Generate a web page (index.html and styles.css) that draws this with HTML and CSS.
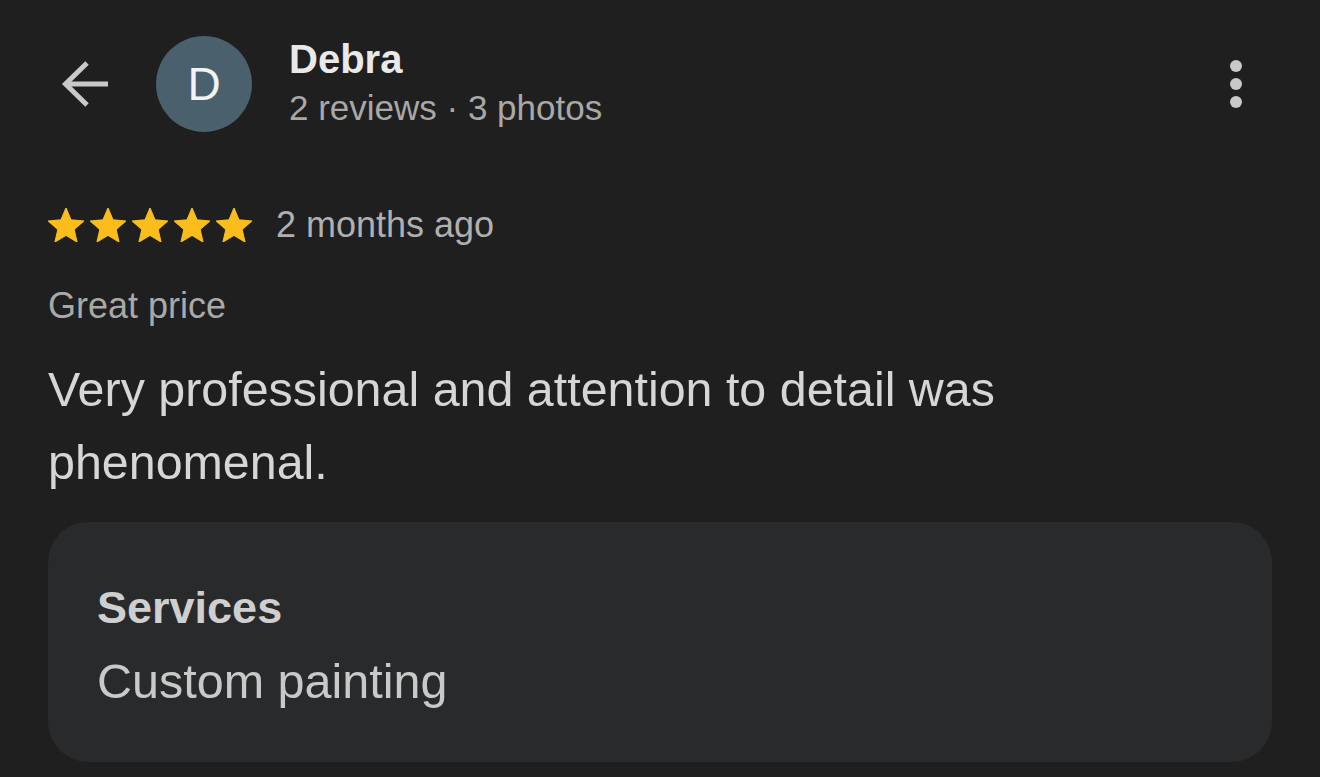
FILE: index.html
```html
<!DOCTYPE html>
<html lang="en">
<head>
<meta charset="utf-8">
<title>Review</title>
<link rel="stylesheet" href="styles.css">
</head>
<body>
<div class="page">
  <header class="header">
    <button class="back" aria-label="Back">
      <svg width="48" height="48" viewBox="0 0 48 48" fill="none" stroke="#c9c9c9" stroke-width="5" stroke-linecap="butt">
        <path d="M5 24H48"/>
        <path d="M27 3L5.5 24L27 45" stroke-linejoin="miter"/>
      </svg>
    </button>
    <div class="avatar">D</div>
    <div class="who">
      <div class="name">Debra</div>
      <div class="meta">2 reviews · 3 photos</div>
    </div>
    <div class="more" aria-label="More">
      <span class="dot"></span><span class="dot"></span><span class="dot"></span>
    </div>
  </header>

  <main class="review">
    <div class="rating">
      <div class="stars">
        <svg class="star" viewBox="2 2 20 19"><path d="M12 17.27L18.18 21l-1.64-7.03L22 9.24l-7.19-.61L12 2 9.19 8.63 2 9.24l5.46 4.73L5.82 21z"/></svg>
        <svg class="star" viewBox="2 2 20 19"><path d="M12 17.27L18.18 21l-1.64-7.03L22 9.24l-7.19-.61L12 2 9.19 8.63 2 9.24l5.46 4.73L5.82 21z"/></svg>
        <svg class="star" viewBox="2 2 20 19"><path d="M12 17.27L18.18 21l-1.64-7.03L22 9.24l-7.19-.61L12 2 9.19 8.63 2 9.24l5.46 4.73L5.82 21z"/></svg>
        <svg class="star" viewBox="2 2 20 19"><path d="M12 17.27L18.18 21l-1.64-7.03L22 9.24l-7.19-.61L12 2 9.19 8.63 2 9.24l5.46 4.73L5.82 21z"/></svg>
        <svg class="star" viewBox="2 2 20 19"><path d="M12 17.27L18.18 21l-1.64-7.03L22 9.24l-7.19-.61L12 2 9.19 8.63 2 9.24l5.46 4.73L5.82 21z"/></svg>
      </div>
      <span class="when">2 months ago</span>
    </div>
    <div class="tag">Great price</div>
    <p class="text">Very professional and attention to detail was phenomenal.</p>
    <section class="card">
      <div class="card-title">Services</div>
      <div class="card-value">Custom painting</div>
    </section>
  </main>
</div>
</body>
</html>
```

FILE: styles.css
```css
* { box-sizing: border-box; }
html, body {
  margin: 0;
  padding: 0;
  background: #1f1f1f;
}
body {
  font-family: "Liberation Sans", Arial, sans-serif;
  width: 1320px;
  height: 777px;
  overflow: hidden;
}
.header {
  display: flex;
  align-items: flex-start;
  padding: 36px 78px 0 60px;
}
.back {
  background: none;
  border: 0;
  padding: 0;
  width: 48px;
  height: 48px;
  margin-top: 24px;
  display: flex;
}
.avatar {
  width: 96px;
  height: 96px;
  border-radius: 50%;
  background: #4a616d;
  color: #f2f2f2;
  font-size: 46px;
  display: flex;
  align-items: center;
  justify-content: center;
  margin-left: 48px;
  flex-shrink: 0;
}
.who {
  margin-left: 37px;
  display: flex;
  flex-direction: column;
}
.name {
  font-size: 40px;
  font-weight: bold;
  line-height: 46px;
  color: #e9e9e9;
}
.meta {
  font-size: 35px;
  line-height: 40px;
  margin-top: 6px;
  color: #a8a8a8;
}
.more {
  margin-left: auto;
  margin-top: 24px;
  display: flex;
  flex-direction: column;
  align-items: center;
  gap: 6px;
  width: 12px;
}
.dot {
  width: 12px;
  height: 12px;
  border-radius: 50%;
  background: #c9c9c9;
}
.review {
  padding: 0 48px;
}
.rating {
  display: flex;
  align-items: center;
  margin-top: 73px;
  height: 40px;
}
.stars {
  display: flex;
  gap: 6px;
}
.star {
  width: 36px;
  height: 34px;
  fill: #fabd1c;
  stroke: #fabd1c;
  stroke-width: 0.6;
  stroke-linejoin: round;
}
.when {
  margin-left: 24px;
  font-size: 36px;
  line-height: 40px;
  color: #b0b0b0;
}
.tag {
  margin-top: 41px;
  font-size: 36px;
  line-height: 40px;
  color: #a9a9a9;
}
.text {
  margin: 27px 0 0;
  font-size: 48.4px;
  line-height: 73px;
  color: #d6d6d6;
  max-width: 1010px;
}
.card {
  margin-top: 23px;
  background: #282a2c;
  border-radius: 40px;
  padding: 59px 49px 53px;
}
.card-title {
  font-size: 45px;
  font-weight: bold;
  line-height: 54px;
  color: #cfcfcf;
}
.card-value {
  margin-top: 18px;
  font-size: 48.5px;
  line-height: 56px;
  color: #c9c9c9;
}
```
